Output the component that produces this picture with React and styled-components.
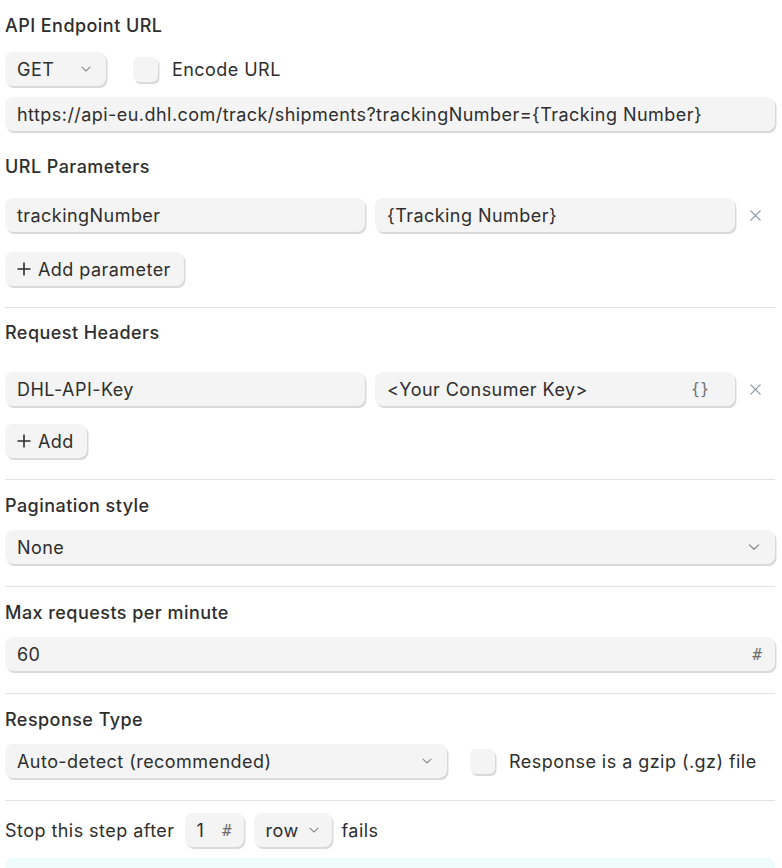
import styled, { createGlobalStyle } from 'styled-components'

const Global = createGlobalStyle`
  body {
    margin: 0;
    background: #fff;
    font-family: Inter, "Noto Sans", sans-serif;
    color: #2e2e2e;
    letter-spacing: 0.45px;
  }
`

const Page = styled.div`
  width: 770px;
  padding-left: 5px;
`

const Section = styled.section`
  padding: ${p => p.$pad || '14px 0 21px'};
  border-bottom: ${p => (p.$last ? 'none' : '1px solid #e3e3e3')};
`

const Title = styled.h3`
  margin: ${p => p.$mt || '0'} 0 ${p => p.$mb || '12px'};
  font-size: 18px;
  line-height: 24px;
  font-weight: 500;
  color: #2e2e2e;
`

const Field = styled.div`
  display: flex;
  align-items: center;
  justify-content: space-between;
  box-sizing: border-box;
  height: 34px;
  width: ${p => p.$w || '100%'};
  padding: 0 ${p => p.$pr || '14px'} 0 12px;
  background: #f4f4f4;
  border-radius: 8px;
  box-shadow: 1.5px 2px 0 #d9d9d9;
  font-size: 18px;
  color: #2e2e2e;
  white-space: nowrap;
  flex-shrink: 0;
`

const Stack = styled.div`
  display: flex;
  flex-direction: column;
  gap: 11px;
`

const Row = styled.div`
  display: flex;
  align-items: center;
  gap: ${p => p.$gap || '10px'};
`

const KVRow = styled.div`
  display: grid;
  grid-template-columns: 1fr 1fr 20px;
  gap: 10px;
  align-items: center;
  padding-right: 10px;
  margin-top: ${p => p.$mt || '19px'};
  margin-bottom: ${p => p.$mb || '20px'};
`

const AddButton = styled.div`
  display: inline-flex;
  align-items: center;
  gap: 6px;
  height: 34px;
  box-sizing: border-box;
  padding: 0 13px 0 11px;
  background: #f4f4f4;
  border-radius: 8px;
  box-shadow: 1.5px 2px 0 #d9d9d9;
  font-size: 18px;
  color: #2e2e2e;
`

const Check = styled.div`
  width: 25px;
  height: 25px;
  box-sizing: border-box;
  border-radius: 6px;
  background: #f4f4f4;
  box-shadow: 1.5px 2px 0 #d9d9d9;
  margin-left: ${p => p.$ml || '0'};
  flex-shrink: 0;
`

const Label = styled.span`
  font-size: 18px;
  color: #2e2e2e;
  margin-left: ${p => p.$ml || '0'};
`

const Glyph = styled.span`
  font-size: ${p => p.$size || '15px'};
  color: #6f6f6f;
  letter-spacing: 0;
  font-family: "DejaVu Sans Mono", monospace;
`

const Remove = styled.div`
  display: flex;
  align-items: center;
  justify-content: center;
`

const Band = styled.div`
  height: 16px;
  margin-top: 11px;
  background: #effcfc;
  border-radius: 8px 8px 0 0;
`

const Chevron = ({ size = 12 }) => (
  <svg width={size} height={size} viewBox="0 0 12 12" fill="none">
    <path d="M2 4.2 L6 8 L10 4.2" stroke="#8a8a8a" strokeWidth="1.1" strokeLinecap="round" strokeLinejoin="round" />
  </svg>
)

const Cross = () => (
  <svg width="13" height="13" viewBox="0 0 14 14" fill="none">
    <path d="M2 2 L12 12 M12 2 L2 12" stroke="#8a99a6" strokeWidth="1.4" strokeLinecap="round" />
  </svg>
)

const Plus = () => (
  <svg width="16" height="16" viewBox="0 0 16 16" fill="none">
    <path d="M8 1.5 V14.5 M1.5 8 H14.5" stroke="#2e2e2e" strokeWidth="1.6" />
  </svg>
)

export default function App() {
  return (
    <Page>
      <Global />
      <Section $pad="14px 0 21px">
        <Title $mb="14px">API Endpoint URL</Title>
        <Stack>
          <Row $gap="0">
            <Field $w="101px" $pr="14px">
              GET <Chevron />
            </Field>
            <Check $ml="27px" />
            <Label $ml="14px">Encode URL</Label>
          </Row>
          <Field>https://api-eu.dhl.com/track/shipments?trackingNumber={'{'}Tracking Number{'}'}</Field>
        </Stack>
        <Title $mt="24px" $mb="0">URL Parameters</Title>
        <KVRow>
          <Field>trackingNumber</Field>
          <Field>{'{'}Tracking Number{'}'}</Field>
          <Remove><Cross /></Remove>
        </KVRow>
        <AddButton><Plus />Add parameter</AddButton>
      </Section>

      <Section $pad="13px 0 21px">
        <Title $mb="0">Request Headers</Title>
        <KVRow $mt="27px" $mb="18px">
          <Field>DHL-API-Key</Field>
          <Field $pr="26px">
            {'<Your Consumer Key>'}
            <Glyph>{'{}'}</Glyph>
          </Field>
          <Remove><Cross /></Remove>
        </KVRow>
        <AddButton><Plus />Add</AddButton>
      </Section>

      <Section $pad="14px 0 22px">
        <Title>Pagination style</Title>
        <Field $pr="14px">
          None <Chevron size={14} />
        </Field>
      </Section>

      <Section $pad="14px 0 22px">
        <Title>Max requests per minute</Title>
        <Field $pr="13px">
          60 <Glyph $size="16px">#</Glyph>
        </Field>
      </Section>

      <Section $pad="14px 0 22px">
        <Title>Response Type</Title>
        <Row $gap="0">
          <Field $w="442px" $pr="14px">
            Auto-detect (recommended) <Chevron />
          </Field>
          <Check $ml="23px" />
          <Label $ml="14px">Response is a gzip (.gz) file</Label>
        </Row>
      </Section>

      <Section $pad="12px 0 0" $last>
        <Row $gap="10px">
          <Label>Stop this step after</Label>
          <Field $w="59px" $pr="12px">
            1 <Glyph $size="16px">#</Glyph>
          </Field>
          <Field $w="78px" $pr="12px">
            row <Chevron />
          </Field>
          <Label>fails</Label>
        </Row>
        <Band />
      </Section>
    </Page>
  )
}
